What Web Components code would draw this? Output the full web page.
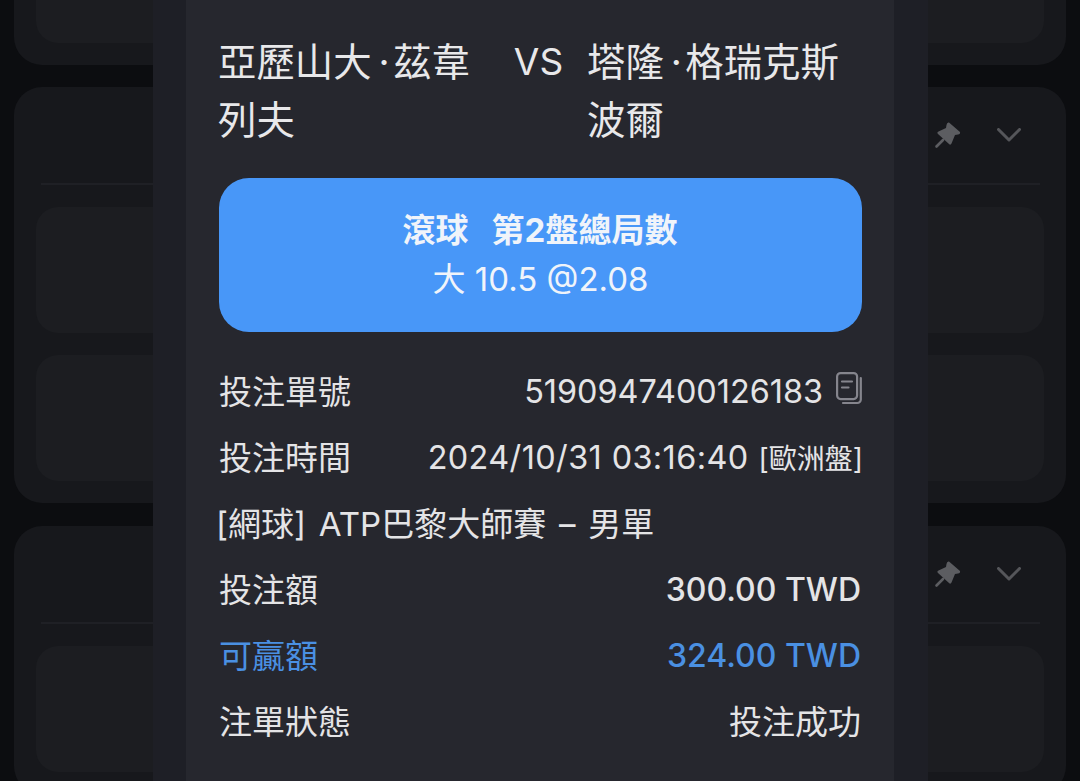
<!DOCTYPE html>
<html lang="zh-Hant">
<head>
<meta charset="utf-8">
<title>注單</title>
<style>
  html, body { margin: 0; height: 100%; overflow: hidden; background: #0c0d10; }
  body { position: relative; font-family: "Inter", "Noto Sans CJK TC", sans-serif; }
</style>
</head>
<body>
<game-list>
  <game-card><game-box></game-box></game-card>
  <game-card pinned><game-box></game-box><game-box></game-box></game-card>
  <game-card pinned><game-box></game-box></game-card>
</game-list>

<bet-modal>
  <team-header home="亞歷山大&#8201;·&#8202;茲韋列夫" away="塔隆&#8201;·&#8202;格瑞克斯波爾"></team-header>
  <bet-banner kind="滾球" market="第2盤總局數" pick="大 10.5 @2.08"></bet-banner>
  <bet-row label="投注單號"><span class="num">5190947400126183</span><copy-icon></copy-icon></bet-row>
  <bet-row label="投注時間"><span class="num time">2024/10/31 03:16:40</span><small-tag>[歐洲盤]</small-tag></bet-row>
  <bet-row label="[網球] ATP巴黎大師賽 – 男單" tight></bet-row>
  <bet-row label="投注額" strong><span class="num">300.00 TWD</span></bet-row>
  <bet-row label="可贏額" strong accent><span class="num">324.00 TWD</span></bet-row>
  <bet-row label="注單狀態"><span class="cjk">投注成功</span></bet-row>
</bet-modal>

<script>
  class GameList extends HTMLElement {
    constructor() {
      super();
      this.attachShadow({ mode: "open" });
      this.shadowRoot.innerHTML = `
        <style>
          :host { display: flex; flex-direction: column; gap: 22.5px; margin-top: -203.5px; padding: 0 14px; }
        </style>
        <slot></slot>`;
    }
  }

  class GameCard extends HTMLElement {
    constructor() {
      super();
      this.attachShadow({ mode: "open" });
    }
    connectedCallback() {
      this.shadowRoot.innerHTML = `
        <style>
          :host { display: block; background: #17181c; border-radius: 28px; padding: 0 22px 22px; }
          .head { height: 96px; display: flex; align-items: center; justify-content: flex-end; gap: 35px; padding-right: 23px; box-sizing: border-box; }
          .rule { height: 2px; background: #1f2025; margin: 0 4px 22px 5px; }
          .boxes { display: flex; flex-direction: column; gap: 22px; }
          svg { display: block; }
        </style>
        <div class="head">
          <svg width="28" height="28" viewBox="0 0 28 28">
            <path d="M15 1.500 26 11Q26.500 13 24 13.500L21 14 17.500 22.500Q16.500 24.500 15 23L4 13Q2.500 11.500 4.500 10.500L12 7 12.500 4Q13 1 15 1.500Z" fill="#5c5d61"/>
            <path d="M9 19 2.500 25.500" stroke="#5c5d61" stroke-width="2.600" stroke-linecap="round"/>
          </svg>
          <svg width="24" height="14" viewBox="0 0 24 14">
            <path d="M1.500 1.500 12 12 22.500 1.500" fill="none" stroke="#55565a" stroke-width="3" stroke-linecap="round" stroke-linejoin="round"/>
          </svg>
        </div>
        <div class="rule"></div>
        <div class="boxes"><slot></slot></div>`;
    }
  }

  class GameBox extends HTMLElement {
    constructor() {
      super();
      this.attachShadow({ mode: "open" });
      this.shadowRoot.innerHTML = `
        <style>
          :host { display: block; height: 126px; background: #1c1d21; border-radius: 22px; }
        </style>`;
    }
  }

  class BetModal extends HTMLElement {
    constructor() {
      super();
      this.attachShadow({ mode: "open" });
      this.shadowRoot.innerHTML = `
        <style>
          :host { position: absolute; top: 0; bottom: 0; left: 153px; width: 775px; background: #1e1f26; display: flex; justify-content: center; box-sizing: border-box; }
          .panel { width: 708px; margin-right: 1px; box-sizing: border-box; background: #26272e; padding: 33px 32px 0 33px; color: #e4e4e6; font-size: 33px; }
        </style>
        <div class="panel"><slot></slot></div>`;
    }
  }

  class TeamHeader extends HTMLElement {
    constructor() {
      super();
      this.attachShadow({ mode: "open" });
    }
    connectedCallback() {
      this.shadowRoot.innerHTML = `
        <style>
          :host { display: grid; grid-template-columns: 272px 97px 1fr; font-size: 38.4px; line-height: 58px; color: #e8e8ea; margin: 0 0 29px -1px; }
          .vs { text-align: center; font-size: 37px; }
        </style>
        <div>${this.getAttribute("home")}</div>
        <div class="vs">VS</div>
        <div>${this.getAttribute("away")}</div>`;
    }
  }

  class BetBanner extends HTMLElement {
    constructor() {
      super();
      this.attachShadow({ mode: "open" });
    }
    connectedCallback() {
      this.shadowRoot.innerHTML = `
        <style>
          :host { display: flex; flex-direction: column; align-items: center; justify-content: center; height: 154px; background: #4897f8; border-radius: 30px; color: #f0f4fa; margin-bottom: 26px; line-height: 49px; font-size: 33px; }
          .t { display: flex; gap: 23px; font-weight: 700; margin-right: 1px; }
        </style>
        <div class="t"><span>${this.getAttribute("kind")}</span><span>${this.getAttribute("market")}</span></div>
        <div>${this.getAttribute("pick")}</div>`;
    }
  }

  class BetRow extends HTMLElement {
    constructor() {
      super();
      this.attachShadow({ mode: "open" });
    }
    connectedCallback() {
      this.shadowRoot.innerHTML = `
        <style>
          :host { display: flex; align-items: center; justify-content: space-between; height: 66px; font-size: 33px; white-space: nowrap; }
          :host([tight]) { margin-left: -3px; word-spacing: 3.5px; }
          :host([accent]) { color: #4a90e2; }
          .label { margin-bottom: 3px; }
          .val { display: flex; align-items: center; gap: 11px; }
          :host([strong]) .val { font-weight: 500; margin-right: 1px; }
          ::slotted(.num) { font-size: 32.4px; }
          :host([strong]) ::slotted(.num) { font-size: 32px; }
          ::slotted(.time) { letter-spacing: .4px; margin-right: -1px; }
          ::slotted(.cjk) { margin: 0 1px 3px 0; }
        </style>
        <div class="label">${this.getAttribute("label")}</div>
        <div class="val"><slot></slot></div>`;
    }
  }

  class SmallTag extends HTMLElement {
    constructor() {
      super();
      this.attachShadow({ mode: "open" });
      this.shadowRoot.innerHTML = `
        <style>:host { display: inline-block; font-size: 28px; margin-right: -1px; }</style>
        <slot></slot>`;
    }
  }

  class CopyIcon extends HTMLElement {
    constructor() {
      super();
      this.attachShadow({ mode: "open" });
      this.shadowRoot.innerHTML = `
        <style>:host { display: block; width: 26px; height: 33px; margin-top: -6px; margin-left: 2px; } svg { display: block; }</style>
        <svg width="26" height="33" viewBox="0 0 26 33" fill="none" stroke="#85858d" stroke-width="2.200" stroke-linecap="round">
          <rect x="1.100" y="1.100" width="20" height="26" rx="3.500"/>
          <path d="M6 9.500h10M6 15.500h6.500"/>
          <path d="M24.800 6v21.500a3.500 3.500 0 0 1-3.500 3.500H7"/>
        </svg>`;
    }
  }

  customElements.define("game-list", GameList);
  customElements.define("game-card", GameCard);
  customElements.define("game-box", GameBox);
  customElements.define("bet-modal", BetModal);
  customElements.define("team-header", TeamHeader);
  customElements.define("bet-banner", BetBanner);
  customElements.define("bet-row", BetRow);
  customElements.define("small-tag", SmallTag);
  customElements.define("copy-icon", CopyIcon);
</script>
</body>
</html>
